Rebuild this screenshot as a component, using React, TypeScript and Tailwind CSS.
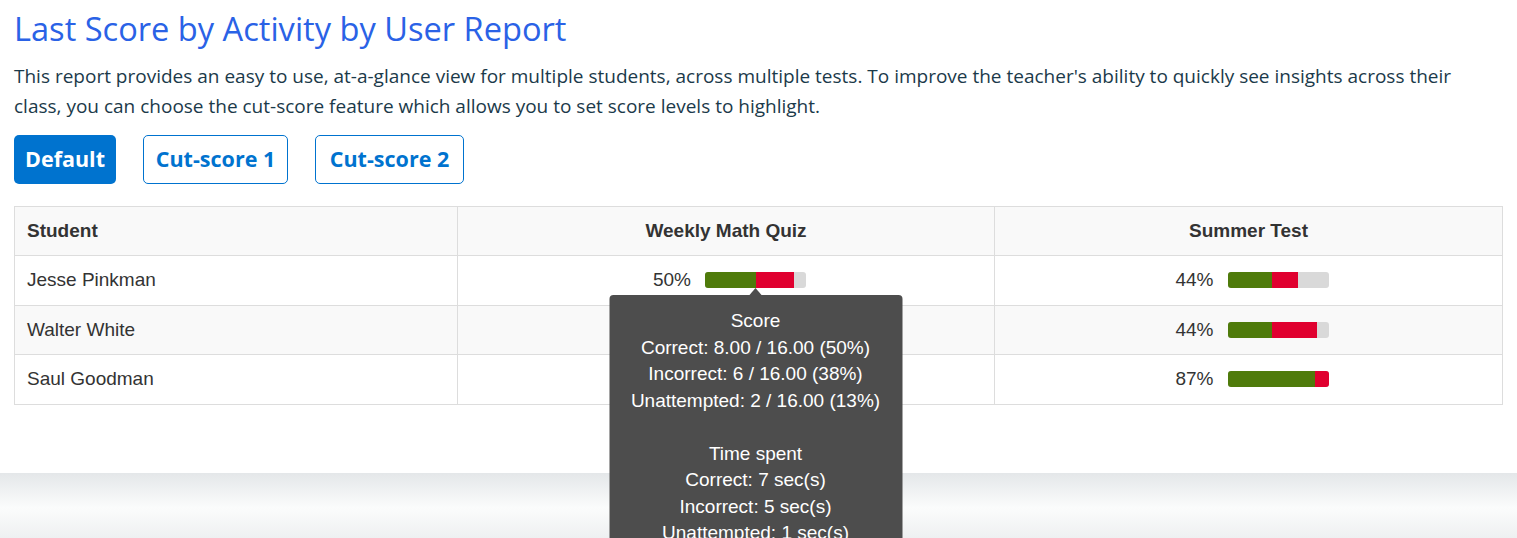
const rows = [
  {
    name: "Jesse Pinkman",
    quiz: { pct: 50, correct: 50, incorrect: 38 },
    summer: { pct: 44, correct: 44, incorrect: 26 },
  },
  {
    name: "Walter White",
    quiz: null,
    summer: { pct: 44, correct: 44, incorrect: 45 },
  },
  {
    name: "Saul Goodman",
    quiz: null,
    summer: { pct: 87, correct: 87, incorrect: 13 },
  },
];

function ScoreBar({ correct, incorrect }: { correct: number; incorrect: number }) {
  return (
    <div className="flex h-4 w-[101px] overflow-hidden rounded-[3px] bg-[#d9d9d9]">
      <div className="h-full bg-[#4f7b0b]" style={{ width: `${correct}%` }} />
      <div className="h-full bg-[#e0002f]" style={{ width: `${incorrect}%` }} />
    </div>
  );
}

function Tooltip() {
  return (
    <div className="absolute left-1/2 top-[16px] z-10 w-[293px] -translate-x-1/2">
      <div className="mx-auto h-0 w-0 border-x-[6px] border-b-[7px] border-x-transparent border-b-[#4d4d4d]" />
      <div className="rounded-[4px] bg-[#4d4d4d] px-2 py-[13px] text-center text-[19px] leading-[26.5px] text-white">
        <div>Score</div>
        <div>Correct: 8.00 / 16.00 (50%)</div>
        <div>Incorrect: 6 / 16.00 (38%)</div>
        <div>Unattempted: 2 / 16.00 (13%)</div>
        <div>&nbsp;</div>
        <div>Time spent</div>
        <div>Correct: 7 sec(s)</div>
        <div>Incorrect: 5 sec(s)</div>
        <div>Unattempted: 1 sec(s)</div>
      </div>
    </div>
  );
}

function ScoreCell({ data, tip }: { data: { pct: number; correct: number; incorrect: number } | null; tip?: boolean }) {
  if (!data) return null;
  return (
    <div className="flex items-center justify-center gap-[14px] pl-[7px]">
      <span>{data.pct}%</span>
      <div className="relative">
        <ScoreBar correct={data.correct} incorrect={data.incorrect} />
        {tip && <Tooltip />}
      </div>
    </div>
  );
}

export default function App() {
  return (
    <div className="min-h-screen bg-white">
      <div className="bg-white px-[14px] pb-[68px] pt-[9px]">
        <h1 className="font-['Open_Sans',sans-serif] text-[32.6px] leading-[40px] text-[#2a62e6]">
          Last Score by Activity by User Report
        </h1>
        <p className="mt-[12px] max-w-[1455px] font-['Open_Sans',sans-serif] text-[19px] leading-[30px] text-[#1b3a4a]">
          This report provides an easy to use, at-a-glance view for multiple students, across multiple tests. To improve the teacher's ability to quickly see insights across their class, you can choose the cut-score feature which allows you to set score levels to highlight.
        </p>
        <div className="mt-[14px] flex gap-[27px] font-['Open_Sans',sans-serif] text-[21.5px] font-bold">
          <button className="h-[49px] w-[102px] rounded-[5px] bg-[#0073cf] text-white">Default</button>
          <button className="h-[49px] w-[145px] rounded-[5px] border border-[#0073cf] bg-white text-[#0073cf]">Cut-score 1</button>
          <button className="h-[49px] w-[149px] rounded-[5px] border border-[#0073cf] bg-white text-[#0073cf]">Cut-score 2</button>
        </div>
        <table className="mt-[22px] w-full border-collapse border border-[#dddddd] font-['Liberation_Sans',Arial,sans-serif] text-[19px] text-[#333333]">
          <thead>
            <tr className="h-[49px] bg-[#f9f9f9]">
              <th className="w-[443px] border border-[#dddddd] px-3 text-left font-bold">Student</th>
              <th className="w-[537px] border border-[#dddddd] px-3 text-center font-bold">Weekly Math Quiz</th>
              <th className="border border-[#dddddd] px-3 text-center font-bold">Summer Test</th>
            </tr>
          </thead>
          <tbody>
            {rows.map((r, i) => (
              <tr key={r.name} className={`h-[49.5px] ${i % 2 === 1 ? "bg-[#f9f9f9]" : "bg-white"}`}>
                <td className="border border-[#dddddd] px-3">{r.name}</td>
                <td className="border border-[#dddddd] px-3">
                  <ScoreCell data={r.quiz} tip={i === 0} />
                </td>
                <td className="border border-[#dddddd] px-3">
                  <ScoreCell data={r.summer} />
                </td>
              </tr>
            ))}
          </tbody>
        </table>
      </div>
      <div className="h-[70px] bg-gradient-to-b from-[#e4e7e9] via-[#fbfcfc] to-[#eceeef]" />
    </div>
  );
}
